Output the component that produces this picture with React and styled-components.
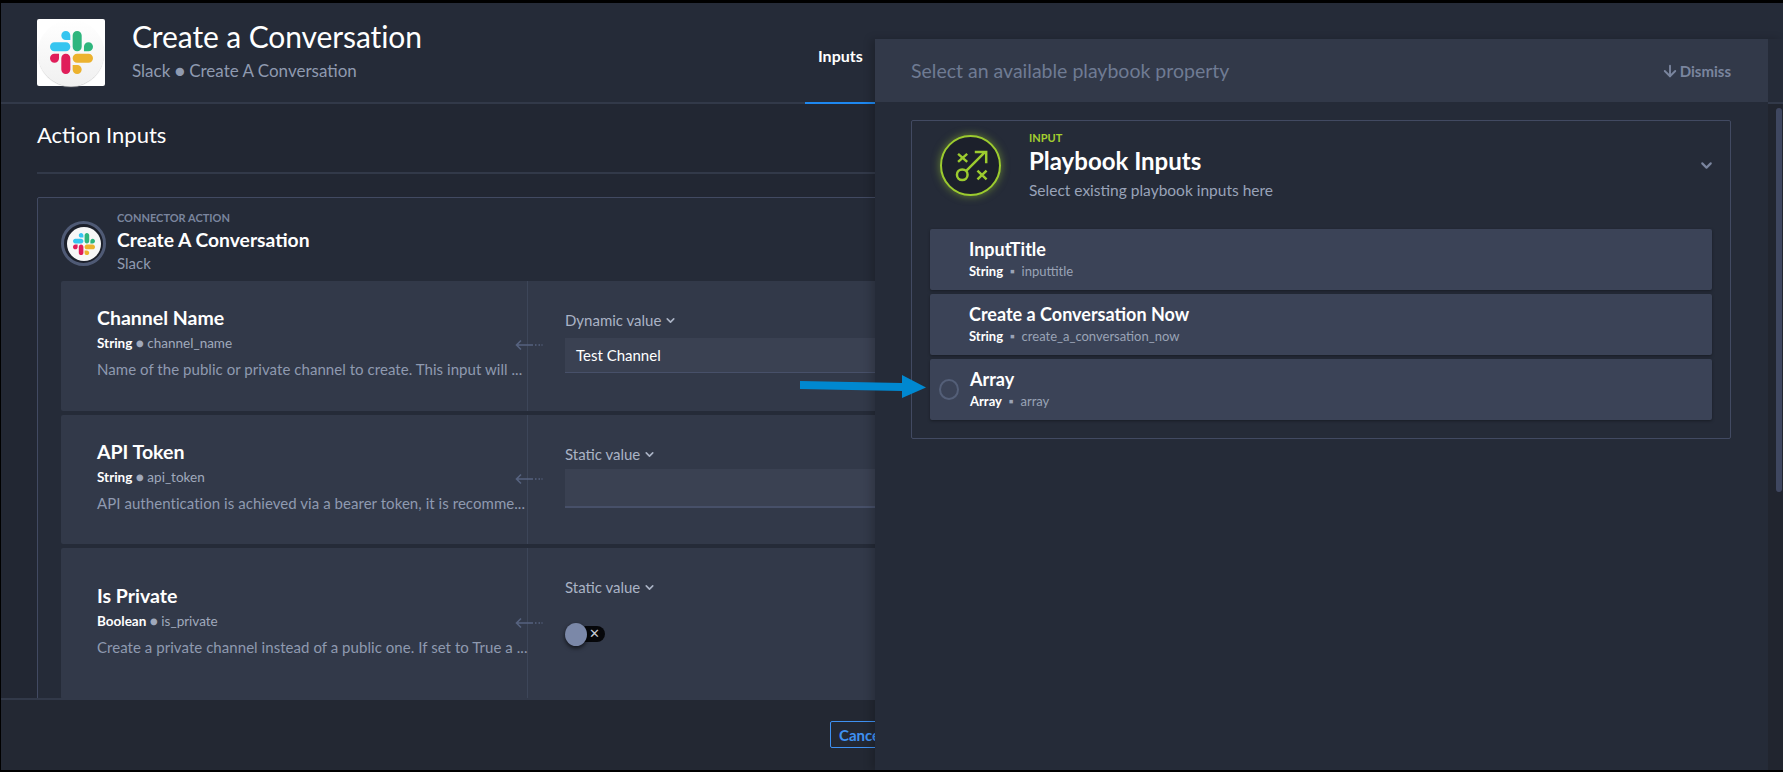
import React from "react";
import styled, { createGlobalStyle } from "styled-components";
import { ChevronDown, ArrowDown } from "lucide-react";

const Global = createGlobalStyle`
  html, body { margin: 0; padding: 0; background: #000; }
  body { font-family: "Lato", "Noto Sans", sans-serif; color: #fff; overflow: hidden; }
  * { box-sizing: border-box; }
`;

const Page = styled.div`
  position: relative;
  width: 1783px;
  height: 772px;
  padding: 3px 0 2px 1px;
  overflow: hidden;
  background: #000;
`;
const Modal = styled.div`
  height: 100%;
  display: flex;
  flex-direction: column;
  background: #222733;
  overflow: hidden;
`;
const Header = styled.header`
  flex: none;
  height: 101px;
  display: grid;
  grid-template-columns: 804px 70px;
  background: #252b38;
  border-bottom: 2px solid #323949;
`;
const TitleBlock = styled.div`
  display: flex;
  align-items: flex-start;
  gap: 27px;
  padding: 16px 0 0 36px;
`;
const LogoTile = styled.div`
  width: 68px;
  height: 67px;
  display: flex;
  align-items: center;
  justify-content: center;
  background: #fff;
  border-radius: 2px;
`;
const LogoDisc = styled.div`
  width: 66px;
  height: 66px;
  display: flex;
  align-items: center;
  justify-content: center;
  border-radius: 50%;
  background: linear-gradient(180deg, #ffffff 0%, #f0f0f0 100%);
  box-shadow: 0 1px 1px #d3d3d3;
`;
const TitleText = styled.div`
  display: flex;
  flex-direction: column;
`;
const Title = styled.h1`
  margin: -1px 0 0;
  font-size: 30px;
  line-height: 36px;
  font-weight: 400;
  letter-spacing: -0.1px;
  color: #fff;
`;
const Subtitle = styled.div`
  margin-top: 7px;
  font-size: 17px;
  line-height: 20px;
  color: #8f9ab0;
`;
const Tab = styled.div`
  height: 101px;
  padding-top: 42px;
  padding-left: 13px;
  font-size: 16px;
  line-height: 22px;
  font-weight: 700;
  color: #fff;
  border-bottom: 2px solid #1e88f0;
`;
const Body = styled.main`
  flex: 1;
  min-height: 0;
  overflow: hidden;
  padding: 0 0 0 36px;
`;
const SectionTitle = styled.h2`
  margin: 0;
  height: 70px;
  padding-top: 17px;
  font-size: 22px;
  line-height: 28px;
  font-weight: 400;
  color: #fff;
  border-bottom: 2px solid #323949;
`;
const ActionCard = styled.section`
  margin-top: 23px;
  width: 1700px;
  border: 1px solid #424a62;
  border-radius: 2px 2px 0 0;
  background: #252b38;
  padding: 0 0 0 23px;
`;
const ActionHead = styled.div`
  display: flex;
  align-items: flex-start;
  gap: 11px;
  height: 83px;
  padding-top: 23px;
`;
const RingIcon = styled.div`
  flex: none;
  width: 45px;
  height: 45px;
  display: flex;
  align-items: center;
  justify-content: center;
  border-radius: 50%;
  border: 3px solid #4f5a75;
  background: #1c202b;
`;
const RingDisc = styled.div`
  width: 34px;
  height: 34px;
  display: flex;
  align-items: center;
  justify-content: center;
  border-radius: 50%;
  background: #f7f7f7;
`;
const ActionText = styled.div`
  margin-top: -10px;
  display: flex;
  flex-direction: column;
`;
const Eyebrow = styled.div`
  font-size: 11px;
  line-height: 14px;
  font-weight: 700;
  color: ${(p) => p.$color || "#7a859e"};
  text-transform: uppercase;
`;
const ActionName = styled.div`
  margin-top: 3px;
  font-size: 19.3px;
  line-height: 24px;
  font-weight: 700;
  color: #fff;
`;
const ActionSource = styled.div`
  margin-top: 2px;
  font-size: 15px;
  line-height: 18px;
  color: #8f9ab0;
`;
const Rows = styled.div`
  display: flex;
  flex-direction: column;
  gap: 4px;
`;
const Row = styled.div`
  position: relative;
  display: grid;
  grid-template-columns: 467px 1fr;
  height: ${(p) => p.$h}px;
  background: #323949;
  border-radius: 2px;
`;
const RowLeft = styled.div`
  min-width: 0;
  display: flex;
  flex-direction: column;
  justify-content: center;
  padding: 0 0 7px 36px;
  border-right: 1px solid #3d4659;
`;
const RowTitle = styled.div`
  font-size: 19.5px;
  line-height: 24px;
  font-weight: 700;
  color: #fff;
`;
const Meta = styled.div`
  margin-top: 5px;
  font-size: 13.5px;
  line-height: 16px;
  color: #a0a9bc;
`;
const MetaType = styled.span`
  font-weight: 700;
  color: #fff;
`;
const Desc = styled.div`
  margin-top: 8px;
  font-size: 15px;
  line-height: 20px;
  letter-spacing: 0.05px;
  color: #8f9ab0;
  white-space: nowrap;
`;
const RowRight = styled.div`
  padding: 29px 0 0 37px;
`;
const ValueSelect = styled.div`
  display: flex;
  align-items: center;
  gap: 3px;
  height: 20px;
  font-size: 15px;
  color: #aab3c5;
`;
const Field = styled.div`
  margin-top: ${(p) => p.$top}px;
  height: ${(p) => p.$h}px;
  padding-left: 11px;
  display: flex;
  align-items: center;
  font-size: 15px;
  color: #fff;
  background: #3a4152;
  border-bottom: ${(p) => p.$line}px solid #475069;
`;
const Flow = styled.svg`
  position: absolute;
  left: 454px;
  top: ${(p) => p.$top}px;
  width: 28px;
  height: 12px;
`;
const Toggle = styled.div`
  position: relative;
  margin-top: 29px;
  width: 40px;
  height: 16px;
  background: #06070a;
  border-radius: 8px;
`;
const ToggleKnob = styled.div`
  position: absolute;
  left: 0;
  top: -3px;
  width: 22px;
  height: 23px;
  border-radius: 50%;
  background: #7b88a8;
  box-shadow: 0 2px 4px rgba(0, 0, 0, 0.65);
`;
const ToggleMark = styled.span`
  position: absolute;
  right: 5px;
  top: -1px;
  font-size: 13px;
  line-height: 16px;
  color: #c5cad6;
`;
const Footer = styled.footer`
  flex: none;
  height: 72px;
  padding: 21px 0 0 829px;
  background: #232833;
  border-top: 2px solid #323949;
`;
const CancelButton = styled.button`
  width: 64px;
  height: 27px;
  padding: 0 0 0 8px;
  text-align: left;
  font: 700 15px "Lato", sans-serif;
  color: #3f91f2;
  background: transparent;
  border: 1px solid #3f91f2;
  border-radius: 2px;
`;
const Panel = styled.aside`
  position: absolute;
  left: 875px;
  top: 39px;
  right: 0;
  bottom: 2px;
  display: grid;
  grid-template-columns: 893px 15px;
  background: #252b38;
  box-shadow: -4px 0 8px rgba(0, 0, 0, 0.18);
`;
const PanelMain = styled.div`
  display: flex;
  flex-direction: column;
  min-width: 0;
`;
const PanelHead = styled.div`
  flex: none;
  height: 63px;
  display: flex;
  align-items: center;
  justify-content: space-between;
  padding: 0 37px 0 36px;
  background: #323949;
`;
const PanelTitle = styled.div`
  font-size: 19.5px;
  color: #6f7b93;
`;
const Dismiss = styled.div`
  display: flex;
  align-items: center;
  gap: 1px;
  font-size: 15px;
  font-weight: 700;
  color: #7a859e;
`;
const Gutter = styled.div`
  display: flex;
  flex-direction: column;
`;
const GutterCap = styled.div`
  flex: none;
  height: 65px;
  border-bottom: 2px solid #323949;
`;
const GutterTrack = styled.div`
  flex: 1;
  padding: 4px 1px 0 8px;
  background: #21252f;
`;
const Thumb = styled.div`
  width: 6px;
  height: 384px;
  background: #3f4760;
  border-radius: 3px;
`;
const PropertyBox = styled.div`
  margin: 18px 37px 0 36px;
  height: 319px;
  border: 1px solid #424a62;
  border-radius: 2px;
`;
const PropertyHead = styled.div`
  position: relative;
  display: flex;
  gap: 28px;
  height: 108px;
  padding: 14px 0 0 28px;
`;
const GlowRing = styled.div`
  flex: none;
  width: 61px;
  height: 61px;
  display: flex;
  align-items: center;
  justify-content: center;
  border: 2px solid #9ccb2f;
  border-radius: 50%;
  background: #1c202b;
  box-shadow: 0 0 8px rgba(156, 203, 47, 0.55);
`;
const PropertyText = styled.div`
  margin-top: -4px;
  display: flex;
  flex-direction: column;
`;
const PropertyTitle = styled.div`
  font-size: 24px;
  line-height: 32px;
  font-weight: 700;
  color: #fff;
`;
const PropertySub = styled.div`
  margin-top: 3px;
  font-size: 15.5px;
  line-height: 20px;
  color: #99a3b8;
`;
const HeadChevron = styled.div`
  position: absolute;
  right: 15px;
  top: 36px;
  color: #7a859e;
  display: flex;
`;
const PropertyList = styled.div`
  display: flex;
  flex-direction: column;
  gap: 4px;
  padding: 0 18px 0 18px;
`;
const PropertyRow = styled.div`
  height: 61px;
  display: flex;
  align-items: center;
  gap: 11px;
  padding-bottom: 2px;
  padding-left: ${(p) => p.$pad}px;
  background: #3b4357;
  border-radius: 2px;
  box-shadow: 0 1px 3px rgba(0, 0, 0, 0.35);
`;
const Radio = styled.div`
  flex: none;
  width: 20px;
  height: 21px;
  margin-top: 2px;
  border: 2px solid #545f78;
  border-radius: 50%;
`;
const PropertyCol = styled.div`
  display: flex;
  flex-direction: column;
`;
const PropertyName = styled.div`
  font-size: 18px;
  line-height: 22px;
  font-weight: 700;
  color: #fff;
`;
const PropertyMeta = styled.div`
  margin-top: 3px;
  font-size: 13px;
  line-height: 16px;
  color: #9aa3b6;
`;
const Pointer = styled.svg`
  position: absolute;
  left: 800px;
  top: 375px;
  width: 126px;
  height: 24px;
  z-index: 5;
`;

const SlackMark = ({ size }) => (
  <svg width={size} height={size} viewBox="0 0 122.8 122.8">
    <path fill="#E01E5A" d="M25.8 77.6c0 7.1-5.8 12.9-12.9 12.9S0 84.7 0 77.6s5.8-12.9 12.9-12.9h12.9v12.9zm6.5 0c0-7.1 5.8-12.9 12.9-12.9s12.9 5.8 12.9 12.9v32.3c0 7.1-5.8 12.9-12.9 12.9s-12.9-5.8-12.9-12.9V77.6z" />
    <path fill="#36C5F0" d="M45.2 25.8c-7.1 0-12.9-5.8-12.9-12.9S38.1 0 45.2 0s12.9 5.8 12.9 12.9v12.9H45.2zm0 6.5c7.1 0 12.9 5.8 12.9 12.9s-5.8 12.9-12.9 12.9H12.9C5.8 58.1 0 52.3 0 45.2s5.8-12.9 12.9-12.9h32.3z" />
    <path fill="#2EB67D" d="M97 45.2c0-7.1 5.8-12.9 12.9-12.9s12.9 5.8 12.9 12.9-5.8 12.9-12.9 12.9H97V45.2zm-6.5 0c0 7.1-5.8 12.9-12.9 12.9s-12.9-5.8-12.9-12.9V12.9C64.7 5.8 70.5 0 77.6 0s12.9 5.8 12.9 12.9v32.3z" />
    <path fill="#ECB22E" d="M77.6 97c7.1 0 12.9 5.8 12.9 12.9s-5.8 12.9-12.9 12.9-12.9-5.8-12.9-12.9V97h12.9zm0-6.5c-7.1 0-12.9-5.8-12.9-12.9s5.8-12.9 12.9-12.9h32.3c7.1 0 12.9 5.8 12.9 12.9s-5.8 12.9-12.9 12.9H77.6z" />
  </svg>
);

const FlowArrow = ({ top }) => (
  <Flow $top={top} viewBox="0 0 28 12" fill="none" stroke="#56627f" strokeWidth="1.6">
    <path d="M6 1.5 1.5 6 6 10.5M1.5 6H18" />
    <path d="M20 6h1.5M23.5 6H25M26.5 6h1" />
  </Flow>
);

const Caret = () => <ChevronDown size={13} strokeWidth={3} color="#aab3c5" />;

const PlaybookGlyph = () => (
  <svg width="38" height="38" viewBox="100 85 100 100" fill="none" stroke="#9ccb2f" strokeWidth="6.5">
    <circle cx="127" cy="158" r="14" />
    <path d="M138 147 186 99M160 98h30v30" />
    <path d="M116 103l24 21M140 103l-24 21M167 147l24 23M191 147l-24 23" />
  </svg>
);

const rows = [
  { h: 130, title: "Channel Name", type: "String", key: "channel_name", desc: "Name of the public or private channel to create. This input will ...", mode: "Dynamic value", arrow: 58, field: { top: 8, h: 35, line: 1, text: "Test Channel" } },
  { h: 129, title: "API Token", type: "String", key: "api_token", desc: "API authentication is achieved via a bearer token, it is recomme...", mode: "Static value", arrow: 58, field: { top: 5, h: 39, line: 2, text: "" } },
  { h: 151, title: "Is Private", type: "Boolean", key: "is_private", desc: "Create a private channel instead of a public one. If set to True a ...", mode: "Static value", arrow: 69, toggle: true },
];

const properties = [
  { pad: 39, name: "InputTitle", type: "String", key: "inputtitle" },
  { pad: 39, name: "Create a Conversation Now", type: "String", key: "create_a_conversation_now" },
  { pad: 9, radio: true, name: "Array", type: "Array", key: "array" },
];

export default function App() {
  return (
    <Page>
      <Global />
      <Modal>
        <Header>
          <TitleBlock>
            <LogoTile>
              <LogoDisc>
                <SlackMark size={43} />
              </LogoDisc>
            </LogoTile>
            <TitleText>
              <Title>Create a Conversation</Title>
              <Subtitle>Slack ● Create A Conversation</Subtitle>
            </TitleText>
          </TitleBlock>
          <Tab>Inputs</Tab>
        </Header>
        <Body>
          <SectionTitle>Action Inputs</SectionTitle>
          <ActionCard>
            <ActionHead>
              <RingIcon>
                <RingDisc>
                  <SlackMark size={22} />
                </RingDisc>
              </RingIcon>
              <ActionText>
                <Eyebrow>Connector Action</Eyebrow>
                <ActionName>Create A Conversation</ActionName>
                <ActionSource>Slack</ActionSource>
              </ActionText>
            </ActionHead>
            <Rows>
              {rows.map((r) => (
                <Row key={r.key} $h={r.h}>
                  <RowLeft>
                    <RowTitle>{r.title}</RowTitle>
                    <Meta>
                      <MetaType>{r.type}</MetaType> ● {r.key}
                    </Meta>
                    <Desc>{r.desc}</Desc>
                  </RowLeft>
                  <FlowArrow top={r.arrow} />
                  <RowRight>
                    <ValueSelect>
                      {r.mode} <Caret />
                    </ValueSelect>
                    {r.field && (
                      <Field $top={r.field.top} $h={r.field.h} $line={r.field.line}>
                        {r.field.text}
                      </Field>
                    )}
                    {r.toggle && (
                      <Toggle>
                        <ToggleKnob />
                        <ToggleMark>✕</ToggleMark>
                      </Toggle>
                    )}
                  </RowRight>
                </Row>
              ))}
            </Rows>
          </ActionCard>
        </Body>
        <Footer>
          <CancelButton>Cancel</CancelButton>
        </Footer>
      </Modal>
      <Panel>
        <PanelMain>
          <PanelHead>
            <PanelTitle>Select an available playbook property</PanelTitle>
            <Dismiss>
              <ArrowDown size={18} strokeWidth={2.5} />
              Dismiss
            </Dismiss>
          </PanelHead>
          <PropertyBox>
            <PropertyHead>
              <GlowRing>
                <PlaybookGlyph />
              </GlowRing>
              <PropertyText>
                <Eyebrow $color="#a4cf30">Input</Eyebrow>
                <PropertyTitle>Playbook Inputs</PropertyTitle>
                <PropertySub>Select existing playbook inputs here</PropertySub>
              </PropertyText>
              <HeadChevron>
                <ChevronDown size={17} strokeWidth={3} />
              </HeadChevron>
            </PropertyHead>
            <PropertyList>
              {properties.map((p) => (
                <PropertyRow key={p.key} $pad={p.pad}>
                  {p.radio && <Radio />}
                  <PropertyCol>
                    <PropertyName>{p.name}</PropertyName>
                    <PropertyMeta>
                      <MetaType>{p.type}</MetaType> &nbsp;▪&nbsp; {p.key}
                    </PropertyMeta>
                  </PropertyCol>
                </PropertyRow>
              ))}
            </PropertyList>
          </PropertyBox>
        </PanelMain>
        <Gutter>
          <GutterCap />
          <GutterTrack>
            <Thumb />
          </GutterTrack>
        </Gutter>
      </Panel>
      <Pointer viewBox="0 0 126 24">
        <polygon fill="#0088d0" points="0,6 102,8 102,0 126,12.5 102,23 102,16 0,14" />
      </Pointer>
    </Page>
  );
}
